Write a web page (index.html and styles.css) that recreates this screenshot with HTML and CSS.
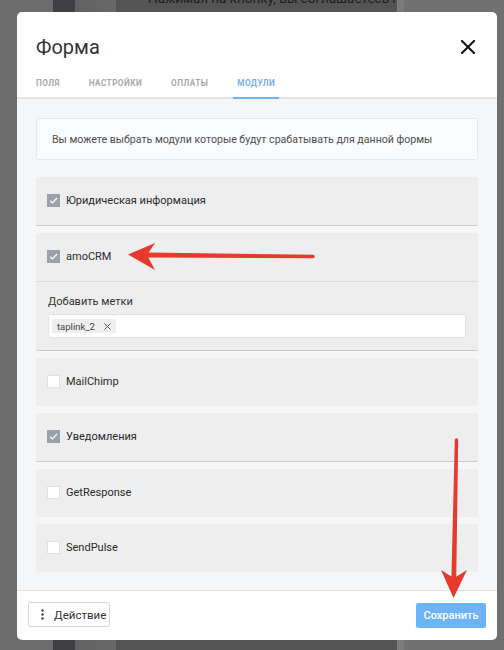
FILE: index.html
```html
<!DOCTYPE html>
<html lang="ru">
<head>
<meta charset="utf-8">
<title>Форма</title>
<link rel="stylesheet" href="styles.css">
</head>
<body>
<div class="backdrop">
  <div class="col c1"></div>
  <div class="col c2"></div>
  <div class="col c3"></div>
  <div class="col c4"><p class="bg-text">Нажимая на кнопку, вы соглашаетесь на</p></div>
  <div class="col c5"></div>
  <div class="col c6"></div>
</div>

<div class="modal">
  <div class="modal-head">
    <div class="title-row">
      <h1 class="title">Форма</h1>
      <svg class="close" width="14" height="14" viewBox="0 0 14 14"><path d="M1 1L13 13M13 1L1 13" stroke="#151515" stroke-width="2.1" stroke-linecap="square"/></svg>
    </div>
    <nav class="tabs">
      <span class="tab">ПОЛЯ</span>
      <span class="tab">НАСТРОЙКИ</span>
      <span class="tab">ОПЛАТЫ</span>
      <span class="tab active">МОДУЛИ</span>
    </nav>
  </div>

  <div class="modal-body">
    <div class="info">Вы можете выбрать модули которые будут срабатывать для данной формы</div>

    <div class="item checked">
      <div class="row"><span class="cb on"><svg width="9" height="7" viewBox="0 0 9 7"><path d="M1 3.6L3.4 6L8 1" fill="none" stroke="#fff" stroke-width="1.2"/></svg></span>Юридическая информация</div>
    </div>

    <div class="item checked">
      <div class="row sep"><span class="cb on"><svg width="9" height="7" viewBox="0 0 9 7"><path d="M1 3.6L3.4 6L8 1" fill="none" stroke="#fff" stroke-width="1.2"/></svg></span>amoCRM</div>
      <div class="tags">
        <div class="tags-label">Добавить метки</div>
        <div class="tags-input"><span class="tag">taplink_2<svg class="tag-x" width="7" height="7" viewBox="0 0 7 7"><path d="M0.5 0.5L6.5 6.5M6.5 0.5L0.5 6.5" stroke="#555" stroke-width="1"/></svg></span></div>
      </div>
    </div>

    <div class="item">
      <div class="row"><span class="cb"></span>MailChimp</div>
    </div>

    <div class="item checked">
      <div class="row"><span class="cb on"><svg width="9" height="7" viewBox="0 0 9 7"><path d="M1 3.6L3.4 6L8 1" fill="none" stroke="#fff" stroke-width="1.2"/></svg></span>Уведомления</div>
    </div>

    <div class="item">
      <div class="row"><span class="cb"></span>GetResponse</div>
    </div>

    <div class="item">
      <div class="row"><span class="cb"></span>SendPulse</div>
    </div>
  </div>

  <div class="modal-foot">
    <button class="btn btn-action"><svg width="3" height="11" viewBox="0 0 3 11"><circle cx="1.5" cy="1.5" r="1.2" fill="#444"/><circle cx="1.5" cy="5.5" r="1.2" fill="#444"/><circle cx="1.5" cy="9.5" r="1.2" fill="#444"/></svg><span>Действие</span></button>
    <button class="btn btn-save">Сохранить</button>
  </div>
</div>

<svg class="arrows" width="504" height="650" viewBox="0 0 504 650">
  <path d="M313 256.5 L148 254.3 L148 255.7 Z" stroke="#e63a2e" stroke-width="3.4" stroke-linejoin="round" fill="#e63a2e"/>
  <path d="M128 254.5 L155 243 L147 255 L155 270 Z" fill="#e63a2e"/>
  <path d="M456.5 440 L454.5 582 L453 582 Z" stroke="#e63a2e" stroke-width="3.4" stroke-linejoin="round" fill="#e63a2e"/>
  <path d="M453.5 598 L441 570 L454 578 L467 570 Z" fill="#e63a2e"/>
</svg>
</body>
</html>
```

FILE: styles.css
```css
* { box-sizing: border-box; }

html, body {
  margin: 0;
  padding: 0;
  width: 504px;
  height: 650px;
  overflow: hidden;
}

body {
  font-family: Roboto, "Noto Sans", "Liberation Sans", sans-serif;
  position: relative;
  background: #6c6d6c;
}

.backdrop {
  display: flex;
  height: 650px;
}

.col { height: 100%; }
.c1 { width: 53px; background: #6b6c6b; }
.c2 { width: 22px; background: #3e3f42; }
.c3 { width: 41px; background: linear-gradient(90deg, #616161, #686868); }
.c4 { width: 281px; background: #545454; padding-left: 32px; overflow: hidden; }
.c5 { width: 7px; background: #7b7b7b; }
.c6 { flex: 1; background: #707070; }

.bg-text {
  margin: -10px 0 0;
  font-size: 13.5px;
  line-height: 16px;
  color: #1d1d1d;
  white-space: nowrap;
}

.modal {
  position: absolute;
  left: 17px;
  top: 12px;
  width: 480px;
  height: 628px;
  background: #fff;
  border-radius: 5px;
  display: flex;
  flex-direction: column;
  overflow: hidden;
}

.modal-head { padding-top: 23px; }

.title-row {
  display: flex;
  justify-content: space-between;
  align-items: center;
  padding: 0 22px 0 19px;
  height: 24px;
}

.title {
  margin: 0;
  font-size: 20px;
  font-weight: 400;
  color: #333;
  line-height: 24px;
}

.close { display: block; }

.tabs {
  display: flex;
  gap: 21px;
  margin-top: 11px;
  padding-left: 15px;
  border-bottom: 2px solid #e3e3e3;
}

.tab {
  padding: 0 4px;
  height: 27px;
  line-height: 27px;
  font-size: 8.2px;
  font-weight: 700;
  letter-spacing: 0.45px;
  color: #a9a9a9;
  margin-bottom: -2px;
  border-bottom: 2px solid transparent;
  box-sizing: content-box;
}

.tab.active {
  color: #72b0f2;
  border-bottom-color: #72b0f2;
}

.modal-body {
  flex: 1;
  background: #f5f6f8;
  padding: 19px 19px 0;
  display: flex;
  flex-direction: column;
  gap: 7px;
}

.info {
  height: 42px;
  background: #fafbfc;
  border: 1px solid #e6e8ea;
  border-radius: 2px;
  display: flex;
  align-items: center;
  padding-left: 15px;
  font-size: 10.6px;
  color: #4f4f4f;
  margin-bottom: 10px;
}

.item {
  background: #eeeeee;
  border-radius: 2px;
  color: #2b2b2b;
  font-size: 11px;
}

.item.checked { border-bottom: 1px solid #c9c9c9; }

.row {
  height: 48px;
  display: flex;
  align-items: center;
  padding-left: 11px;
  padding-bottom: 2px;
}

.row.sep {
  height: 49px;
  border-bottom: 1px solid #dcdcdc;
}

.cb {
  width: 13px;
  height: 13px;
  margin-right: 6px;
  background: #fff;
  border: 1px solid #e2e2e2;
  display: flex;
  align-items: center;
  justify-content: center;
}

.cb.on {
  background: #9aa1a9;
  border-color: #9aa1a9;
}

.cb svg { display: block; }

.tags { padding: 13px 12px 12px; }

.tags-label {
  font-size: 11px;
  line-height: 13px;
  color: #333;
  margin-bottom: 6px;
}

.tags-input {
  height: 24px;
  background: #fff;
  border: 1px solid #e3e3e3;
  border-radius: 2px;
  padding: 3px 3px;
  display: flex;
  align-items: center;
}

.tag {
  height: 14px;
  background: #efefef;
  border-radius: 1px;
  padding: 0 5px 0 5px;
  font-size: 9.5px;
  color: #444;
  display: flex;
  align-items: center;
}

.tag-x {
  margin-left: 9px;
  display: block;
}

.modal-foot {
  height: 50px;
  border-top: 1px solid #e5e5e5;
  padding: 11px 11px 0;
  display: flex;
  justify-content: space-between;
  align-items: flex-start;
}

.btn {
  height: 25px;
  border-radius: 2px;
  font-family: Roboto, "Noto Sans", "Liberation Sans", sans-serif;
  font-size: 11.5px;
  padding: 0;
  display: flex;
  align-items: center;
  cursor: pointer;
}

.btn-action {
  width: 82px;
  background: #fff;
  border: 1px solid #d8d8d8;
  color: #333;
  padding-left: 12px;
}

.btn-action span { margin-left: 10px; }

.btn-save {
  width: 70px;
  margin-top: 1px;
  background: #6db3f8;
  border: 0;
  color: #fff;
  font-weight: 500;
  font-size: 11px;
  justify-content: center;
}

.arrows {
  position: absolute;
  left: 0;
  top: 0;
  pointer-events: none;
}
```
